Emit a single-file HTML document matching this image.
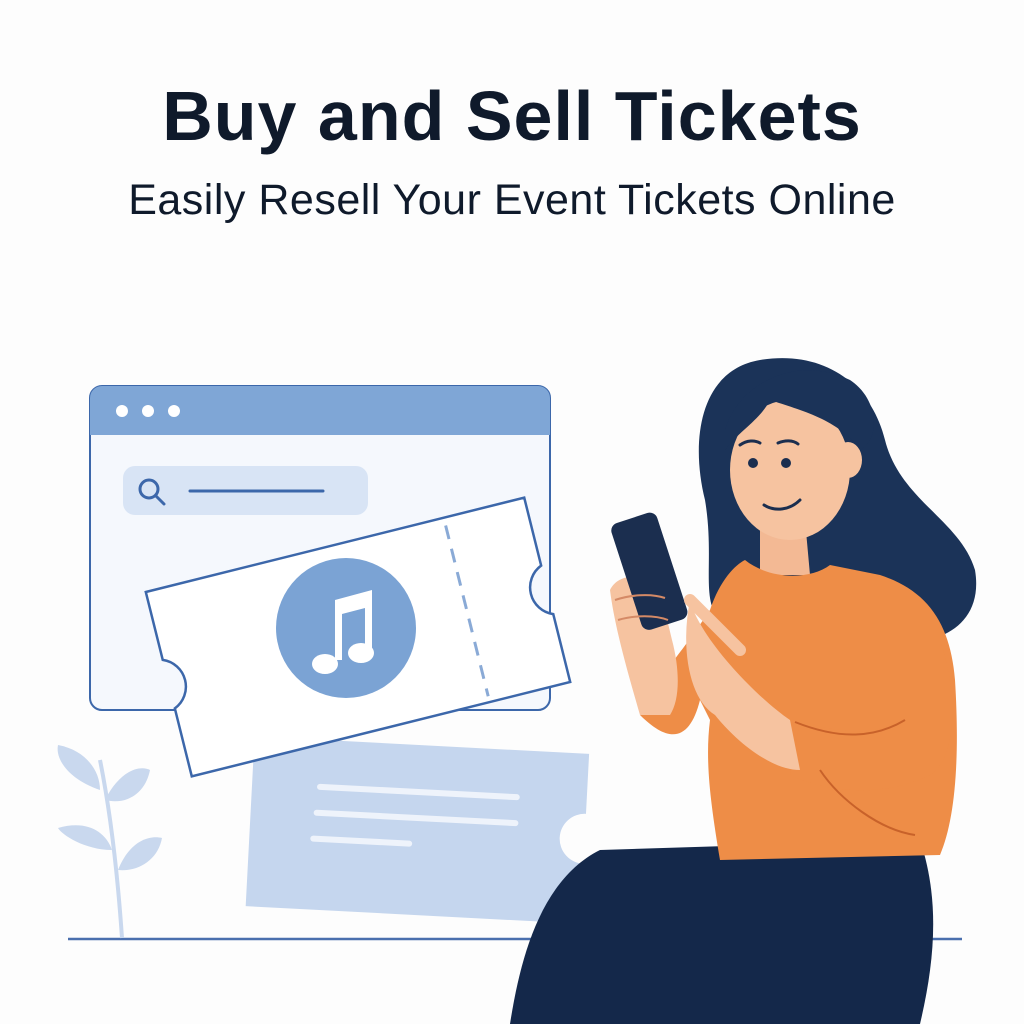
<!DOCTYPE html>
<html><head><meta charset="utf-8"><style>
html,body{margin:0;padding:0;background:#fdfdfd;}
.wrap{position:relative;width:1024px;height:1024px;overflow:hidden;background:#fdfdfd;}
h1{position:absolute;top:76px;left:0;width:1024px;margin:0;text-align:center;font-family:"Liberation Sans",sans-serif;font-weight:bold;font-size:70px;color:#0f1a2b;letter-spacing:1px;}
h2{position:absolute;top:176px;left:0;width:1024px;margin:0;text-align:center;font-family:"Liberation Sans",sans-serif;font-weight:normal;font-size:43px;color:#0f1a2b;letter-spacing:0.5px;}
svg{position:absolute;left:0;top:0;}
</style></head><body><div class="wrap">
<h1>Buy and Sell Tickets</h1>
<h2>Easily Resell Your Event Tickets Online</h2>
<svg width="1024" height="1024" viewBox="0 0 1024 1024">
<line x1="68" y1="939" x2="962" y2="939" stroke="#4a6fae" stroke-width="2.5"/>
<g fill="#c9d8ee">
<path d="M122 938 C118 880 112 820 100 760" stroke="#c9d8ee" stroke-width="4" fill="none"/>
<path d="M100 790 C70 780 55 760 58 745 C85 750 100 770 100 790Z"/>
<path d="M105 800 C120 770 140 765 150 770 C145 795 125 805 105 800Z"/>
<path d="M112 850 C85 850 62 835 58 828 C85 820 105 830 112 850Z"/>
<path d="M118 870 C130 840 150 835 162 838 C158 860 138 872 118 870Z"/>
</g>
<g transform="rotate(3 417 828)">
<path d="M250 745 H585 V805 A25 25 0 0 0 585 855 V915 H250Z" fill="#c5d6ee"/>
<g stroke="#eef3fb" stroke-width="6" stroke-linecap="round">
<line x1="318" y1="792" x2="515" y2="792"/>
<line x1="316" y1="818" x2="515" y2="818"/>
<line x1="314" y1="844" x2="410" y2="844"/>
</g>
</g>
<rect x="90" y="386" width="460" height="324" rx="12" fill="#f5f8fd" stroke="#3c67aa" stroke-width="2"/>
<path d="M90 435 V398 A12 12 0 0 1 102 386 H538 A12 12 0 0 1 550 398 V435Z" fill="#7fa6d6"/>
<circle cx="122" cy="411" r="6" fill="#fff"/><circle cx="148" cy="411" r="6" fill="#fff"/><circle cx="174" cy="411" r="6" fill="#fff"/>
<rect x="123" y="466" width="245" height="49" rx="12" fill="#d8e4f5"/>
<circle cx="149" cy="489" r="9" fill="none" stroke="#3c67aa" stroke-width="3"/>
<line x1="156" y1="496" x2="164" y2="504" stroke="#3c67aa" stroke-width="3" stroke-linecap="round"/>
<line x1="190" y1="491" x2="323" y2="491" stroke="#3c67aa" stroke-width="3" stroke-linecap="round"/>
<g transform="rotate(-14 358 637)">
<path d="M163 542 H553 V612 A27 27 0 0 0 553 662 V732 H163 V662 A27 27 0 0 0 163 612Z" fill="#fff" stroke="#3c67aa" stroke-width="2.5"/>
<line x1="470" y1="550" x2="470" y2="726" stroke="#8aaad6" stroke-width="3" stroke-dasharray="14 10"/>
</g>
<circle cx="346" cy="628" r="70" fill="#7ba3d4"/>
<g fill="#fff">
<path d="M335 600 L372 590 L372 650 L365 650 L365 608 L342 614 L342 660 L335 660Z"/>
<ellipse cx="325" cy="664" rx="13" ry="10"/>
<ellipse cx="361" cy="653" rx="13" ry="10"/>
</g>
<path d="M760 360 C700 370 690 440 705 500 C715 560 700 600 720 620 L880 640 C930 650 985 630 975 570 C960 520 900 500 885 440 C870 380 820 350 760 360Z" fill="#1b3358"/>
<path d="M760 520 L805 520 L810 575 L760 575Z" fill="#f3b994"/>
<path d="M600 850 L920 840 C940 900 935 960 920 1024 L510 1024 C520 960 540 880 600 850Z" fill="#14284a"/>
<path d="M745 560 C770 580 810 580 830 565 L880 575 C925 590 950 620 955 680 C960 760 955 820 940 855 L720 860 C710 800 705 760 710 720 L700 700 C690 740 670 745 640 715 L640 700 C660 680 690 640 710 610 C720 580 735 565 745 560Z" fill="#ee8d47"/>
<path d="M940 640 C960 700 955 760 930 775 C880 800 820 790 790 775 L800 720 C840 735 880 735 900 720 Z" fill="#ee8d47"/>
<path d="M795 722 C840 740 875 738 905 720 M820 770 C840 800 880 830 915 835" stroke="#c8622a" stroke-width="2" fill="none"/>
<path d="M690 600 C700 640 760 700 790 720 L800 770 C770 770 735 740 715 715 C690 700 680 650 690 600Z" fill="#f6c3a0"/>
<path d="M640 715 C630 680 615 630 610 590 C620 570 650 575 660 590 L672 640 C680 670 680 700 670 715Z" fill="#f6c3a0"/>
<g transform="rotate(-18 650 570)">
<rect x="625" y="515" width="48" height="112" rx="8" fill="#1b2e4f"/>
</g>
<path d="M615 600 C630 595 650 593 665 598 M618 620 C635 615 655 615 668 620" stroke="#d58a66" stroke-width="2" fill="none"/>
<path d="M690 600 C700 610 720 630 740 650" stroke="#f6c3a0" stroke-width="12" stroke-linecap="round"/>
<ellipse cx="790" cy="470" rx="60" ry="70" fill="#f6c3a0"/>
<ellipse cx="848" cy="460" rx="14" ry="18" fill="#f6c3a0"/>
<path d="M725 430 C740 380 800 355 850 380 C880 400 880 440 860 450 C840 420 800 410 770 400 C760 420 740 430 725 450Z" fill="#1b3358"/>
<circle cx="753" cy="463" r="5" fill="#1b2e4f"/><circle cx="786" cy="463" r="5" fill="#1b2e4f"/>
<path d="M740 445 C747 440 755 440 760 443 M778 443 C785 440 793 440 798 444" stroke="#1b2e4f" stroke-width="3" fill="none" stroke-linecap="round"/>
<path d="M764 505 C775 512 790 510 800 500" stroke="#1b2e4f" stroke-width="3" fill="none" stroke-linecap="round"/>
</svg>
</div></body></html>
